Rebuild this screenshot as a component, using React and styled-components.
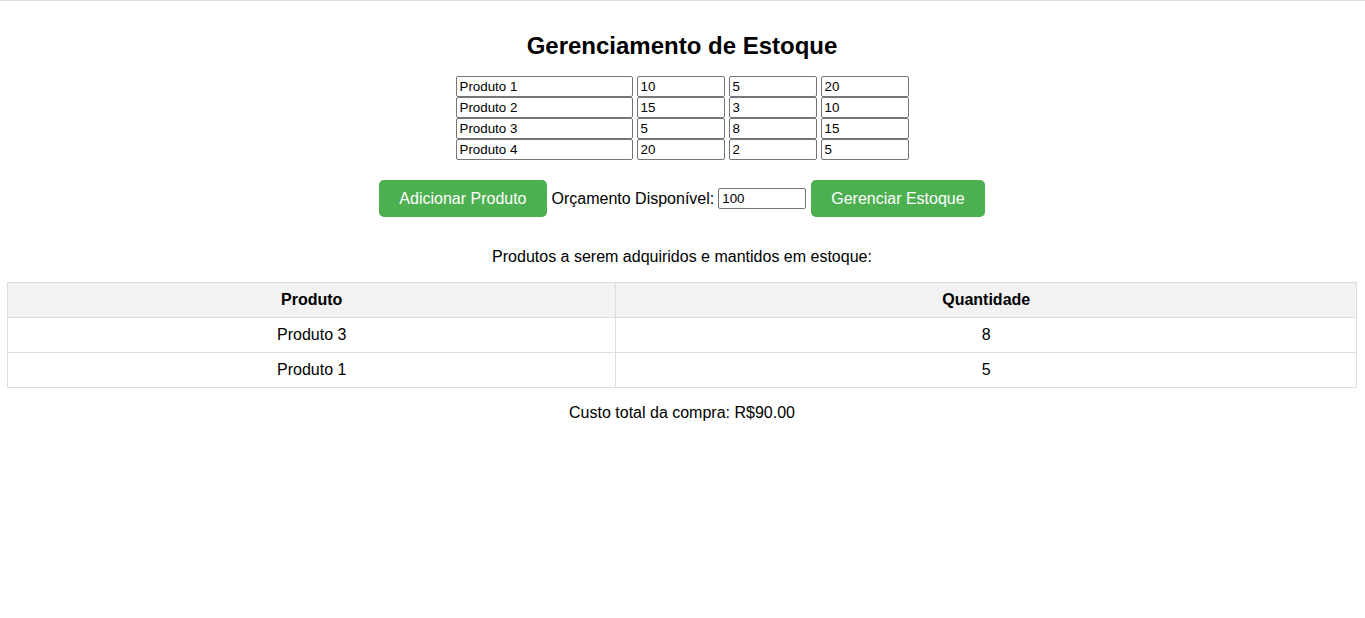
import React, { useState } from "react";
import styled, { createGlobalStyle } from "styled-components";

const GlobalStyle = createGlobalStyle`
  html {
    border-top: 1px solid #dddddd;
  }
  body {
    margin: 0 8px 8px 7px;
    font-family: "Liberation Sans", Arial, sans-serif;
    background: #fff;
    color: #000;
  }
`;

const initialProducts = [
  { name: "Produto 1", price: "10", value: "5", stock: "20" },
  { name: "Produto 2", price: "15", value: "3", stock: "10" },
  { name: "Produto 3", price: "5", value: "8", stock: "15" },
  { name: "Produto 4", price: "20", value: "2", stock: "5" },
];

const results = [
  { name: "Produto 3", qty: 8 },
  { name: "Produto 1", qty: 5 },
];

export default function App() {
  const [products, setProducts] = useState(initialProducts);
  const [budget, setBudget] = useState("100");

  // update one field of one product row
  const updateField = (index, field, value) => {
    setProducts((prev) =>
      prev.map((p, i) => (i === index ? { ...p, [field]: value } : p))
    );
  };

  const addProduct = () => {
    setProducts((prev) => [
      ...prev,
      { name: "", price: "", value: "", stock: "" },
    ]);
  };

  return (
    <>
      <GlobalStyle />
      <Page>
        <Title>Gerenciamento de Estoque</Title>
        <ProductList>
          {products.map((p, i) => (
            <ProductRow key={i}>
              <Field
                wide
                type="text"
                value={p.name}
                onChange={(e) => updateField(i, "name", e.target.value)}
              />
              <Field
                type="text"
                value={p.price}
                onChange={(e) => updateField(i, "price", e.target.value)}
              />
              <Field
                type="text"
                value={p.value}
                onChange={(e) => updateField(i, "value", e.target.value)}
              />
              <Field
                type="text"
                value={p.stock}
                onChange={(e) => updateField(i, "stock", e.target.value)}
              />
            </ProductRow>
          ))}
        </ProductList>
        <Controls>
          <GreenButton onClick={addProduct}>Adicionar Produto</GreenButton>
          <BudgetLabel>
            Orçamento Disponível:
            <Field
              type="text"
              value={budget}
              onChange={(e) => setBudget(e.target.value)}
            />
          </BudgetLabel>
          <GreenButton>Gerenciar Estoque</GreenButton>
        </Controls>
        <Caption>Produtos a serem adquiridos e mantidos em estoque:</Caption>
        <ResultTable>
          <thead>
            <tr>
              <HeadCell first>Produto</HeadCell>
              <HeadCell>Quantidade</HeadCell>
            </tr>
          </thead>
          <tbody>
            {results.map((r) => (
              <tr key={r.name}>
                <Cell>{r.name}</Cell>
                <Cell>{r.qty}</Cell>
              </tr>
            ))}
          </tbody>
        </ResultTable>
        <Caption>Custo total da compra: R$90.00</Caption>
      </Page>
    </>
  );
}

const Page = styled.div`
  text-align: center;
  padding-top: 31px;
`;

const Title = styled.h2`
  margin: 0 0 16px;
  font-size: 24px;
  line-height: 28px;
  font-weight: bold;
`;

const ProductList = styled.div`
  display: flex;
  flex-direction: column;
  align-items: center;
`;

const ProductRow = styled.div`
  display: flex;
  gap: 4px;
`;

const Field = styled.input`
  box-sizing: border-box;
  width: ${({ wide }) => (wide ? "177px" : "88px")};
  height: 21px;
  padding: 1px 3px;
  border: 1px solid #767676;
  border-radius: 2px;
  font-family: "Liberation Sans", Arial, sans-serif;
  font-size: 13.33px;
  color: #000;
  background: #fff;
  outline: none;
`;

const Controls = styled.div`
  display: flex;
  justify-content: center;
  align-items: center;
  gap: 5px;
  margin-top: 20px;
`;

const GreenButton = styled.button`
  height: 37px;
  background: #4caf50;
  color: #fff;
  border: none;
  border-radius: 5px;
  padding: 0 20px;
  font-family: "Liberation Sans", Arial, sans-serif;
  font-size: 16px;
  line-height: 17px;
  cursor: pointer;
`;

const BudgetLabel = styled.label`
  display: flex;
  align-items: center;
  gap: 4px;
  font-size: 16px;
`;

const Caption = styled.p`
  margin: 31px 0 16px;
  font-size: 16px;
  line-height: 18px;

  & + table + & {
    margin-top: 16px;
  }
`;

const ResultTable = styled.table`
  width: 100%;
  border-collapse: collapse;
  font-size: 16px;
`;

const HeadCell = styled.th`
  width: ${({ first }) => (first ? "45.1%" : "auto")};
  background: #f2f2f2;
  border: 1px solid #dddddd;
  padding: 8px;
  line-height: 18px;
  font-weight: bold;
`;

const Cell = styled.td`
  border: 1px solid #dddddd;
  padding: 8px;
  line-height: 18px;
`;
